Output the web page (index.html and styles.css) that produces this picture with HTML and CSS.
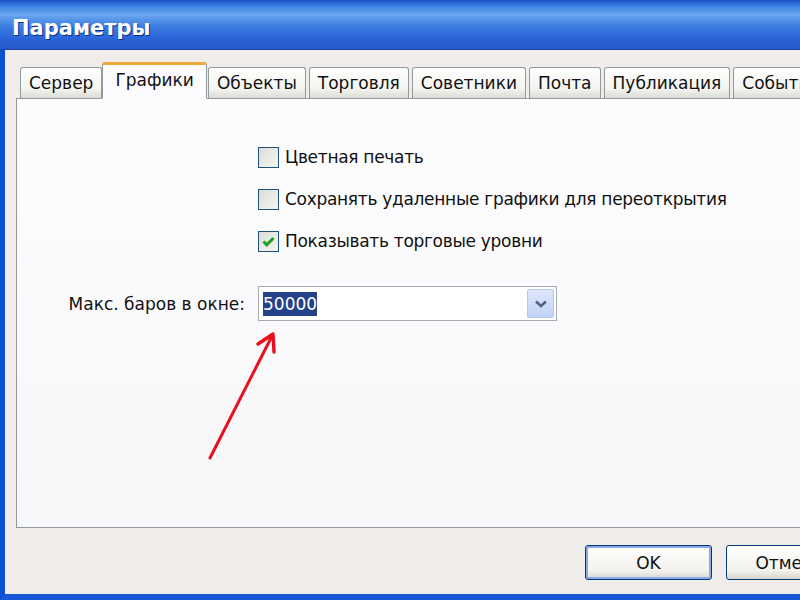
FILE: index.html
```html
<!DOCTYPE html>
<html lang="ru">
<head>
    <meta charset="UTF-8">
    <title>Параметры</title>
    <link rel="stylesheet" href="styles.css">
</head>
<body>

<div class="window">
    <div class="titlebar">Параметры</div>

    <div class="client">
        <div class="tabs">
            <div class="tab">Сервер</div>
            <div class="tab active">Графики</div>
            <div class="tab">Объекты</div>
            <div class="tab">Торговля</div>
            <div class="tab">Советники</div>
            <div class="tab">Почта</div>
            <div class="tab">Публикация</div>
            <div class="tab">События</div>
        </div>

        <div class="panel">
            <div class="form">
                <label class="check"><span class="box"></span>Цветная печать</label>
                <label class="check"><span class="box"></span>Сохранять удаленные графики для переоткрытия</label>
                <label class="check"><span class="box checked">
                    <svg width="13" height="11" viewBox="0 0 13 11"><path d="M1.5 5.5 L4.8 8.8 L11.5 2" fill="none" stroke="#21a121" stroke-width="3"/></svg>
                </span>Показывать торговые уровни</label>

                <div class="field-label">Макс. баров в окне:</div>
                <div class="combo">
                    <span class="combo-text"><span class="sel">50000</span></span>
                    <span class="combo-btn">
                        <svg width="14" height="10" viewBox="0 0 14 10"><path d="M2 2.5 L7 7 L12 2.5" fill="none" stroke="#4d6185" stroke-width="2.6"/></svg>
                    </span>
                </div>
            </div>

            <svg class="pointer" width="90" height="150" viewBox="0 0 90 150">
                <path d="M18 136 L80 14" stroke="#e8101a" stroke-width="3" fill="none" stroke-linecap="round"/>
                <path d="M66 22 L81 12 L82 30" stroke="#e8101a" stroke-width="3.4" fill="none" stroke-linecap="round" stroke-linejoin="round"/>
            </svg>
        </div>

        <div class="buttons">
            <button class="btn default">OK</button>
            <button class="btn">Отмена</button>
        </div>
    </div>
</div>

</body>
</html>
```

FILE: styles.css
```css
body {
    margin: 0;
    width: 800px;
    height: 600px;
    overflow: hidden;
    font-family: "DejaVu Sans", Tahoma, sans-serif;
    font-size: 17px;
    color: #111;
}
.window {
    width: 820px;
    height: 600px;
    box-sizing: border-box;
    border-left: 5px solid #0b4fd4;
    border-bottom: 6px solid #1856d8;
    background: #efecea;
    display: flex;
    flex-direction: column;
}
.titlebar {
    height: 50px;
    margin-left: -5px;
    padding-left: 12px;
    display: flex;
    align-items: center;
    padding-top: 6px;
    box-sizing: border-box;
    font-family: "DejaVu Sans", Tahoma, sans-serif;
    font-weight: bold;
    font-size: 21px;
    color: #fff;
    text-shadow: 1px 1px 0 #0a2f8a;
    background: linear-gradient(#1b4fc4 0%, #3f86e6 14%, #6aa6ef 30%, #3a7ce2 55%, #2a63d6 80%, #2758cc 100%);
    border-bottom: 1px solid #1745b0;
}
.client {
    flex: 1;
    padding: 12px 0 0 11px;
    display: flex;
    flex-direction: column;
}
.tabs {
    display: flex;
    align-items: flex-end;
    height: 36px;
    padding-left: 4px;
    gap: 3px;
    position: relative;
    z-index: 1;
}
.tab {
    height: 31px;
    padding: 0 8px;
    box-sizing: border-box;
    border: 1px solid #919b9c;
    border-bottom: none;
    border-radius: 3px 3px 0 0;
    background: linear-gradient(#ffffff, #f3f3ef 70%, #dcdcd6);
    display: flex;
    align-items: center;
    white-space: nowrap;
}
.tab.active {
    height: 37px;
    margin: 0 -2px 0 -3px;
    padding: 0 12px 4px;
    background: #fcfcfe;
    border-top: 3px solid #f2a93b;
    border-bottom: 1px solid #fcfcfe;
    margin-bottom: -1px;
}
.panel {
    height: 430px;
    margin-right: -20px;
    box-sizing: border-box;
    border: 1px solid #919b9c;
    background: linear-gradient(#fdfdfe, #f7f7fa);
    position: relative;
}
.form {
    display: grid;
    grid-template-columns: 241px 299px;
    padding-top: 48px;
}
.check {
    grid-column: 2;
    height: 42px;
    display: flex;
    align-items: flex-start;
    gap: 6px;
    line-height: 21px;
    white-space: nowrap;
    letter-spacing: -0.3px;
}
.box {
    width: 19px;
    height: 19px;
    border: 1px solid #1c5180;
    background: linear-gradient(135deg, #dcdcd7, #f6f6f3);
    display: flex;
    align-items: center;
    justify-content: center;
    flex: none;
}
.field-label {
    margin-top: 13px;
    height: 35px;
    display: flex;
    align-items: center;
    justify-content: flex-end;
    padding-right: 13px;
}
.combo {
    margin-top: 13px;
    height: 35px;
    box-sizing: border-box;
    border: 1px solid #a5acb5;
    background: #fff;
    display: flex;
    align-items: center;
    padding: 2px;
}
.combo-text {
    flex: 1;
    padding-left: 2px;
}
.sel {
    background: #24428a;
    color: #fff;
    padding: 2px 0;
}
.combo-btn {
    width: 27px;
    height: 100%;
    box-sizing: border-box;
    border: 1px solid #b5c6ea;
    border-radius: 2px;
    background: linear-gradient(#dde7fc, #c3d3f6);
    display: flex;
    align-items: center;
    justify-content: center;
}
.pointer {
    position: absolute;
    left: 175px;
    top: 223px;
}
.buttons {
    display: flex;
    gap: 14px;
    padding: 17px 0 0 569px;
}
.btn {
    width: 127px;
    height: 35px;
    flex: none;
    font-family: "DejaVu Sans", Tahoma, sans-serif;
    font-size: 17px;
    color: #111;
    border: 1px solid #003c74;
    border-radius: 3px;
    background: linear-gradient(#ffffff, #f2f1ec 75%, #d8d6cf);
}
.btn.default {
    box-shadow: inset 0 0 0 2px #8aaae6;
}
```
